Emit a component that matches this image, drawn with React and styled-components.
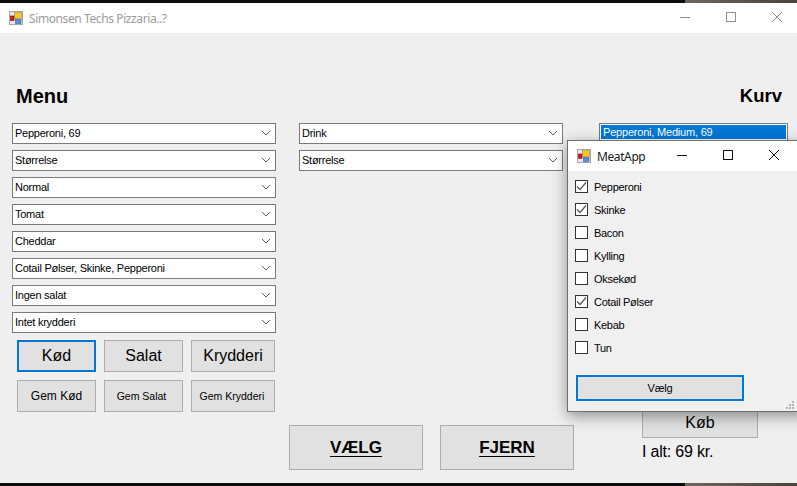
import React from 'react'
import styled, { createGlobalStyle } from 'styled-components'

const GlobalStyle = createGlobalStyle`
  html, body {
    margin: 0;
    padding: 0;
    width: 797px;
    height: 486px;
    overflow: hidden;
    background: #0c0c0c;
  }
  * { box-sizing: border-box; }
`

const Screen = styled.div`
  position: relative;
  width: 797px;
  height: 486px;
  overflow: hidden;
  display: flex;
  flex-direction: column;
  font-family: "Liberation Sans", Arial, sans-serif;
  color: #000;
`

const DesktopStrip = styled.div`
  height: 3px;
  flex: none;
  background: linear-gradient(to right, #0c0c0c 0, #0c0c0c 685px, #6e655a 685px, #4a443d 797px);
`

const MainWindow = styled.div`
  flex: 1;
  display: flex;
  flex-direction: column;
  background: #efefef;
`

const TitleBar = styled.div`
  height: 30px;
  flex: none;
  display: flex;
  align-items: center;
  background: #fff;
  padding-left: 9px;
  margin-right: ${p => p.$right}px;
`

const TitleText = styled.span`
  font-family: "Noto Sans", "Open Sans", sans-serif;
  font-size: 12px;
  letter-spacing: -0.4px;
  margin-left: 6px;
  color: ${p => p.$active ? '#1a1a1a' : '#9b9b9b'};
  flex: 1;
`

const WinButton = styled.span`
  width: 46px;
  height: 100%;
  flex: none;
  display: flex;
  align-items: center;
  justify-content: center;
  padding-bottom: 2px;
  color: ${p => p.$active ? '#111' : '#8f8f8f'};
`

const Headings = styled.div`
  height: 90px;
  flex: none;
  display: flex;
  justify-content: space-between;
  align-items: flex-end;
  padding: 0 15px 16px 16px;
`

const Heading = styled.h1`
  margin: 0;
  font-size: ${p => p.$size}px;
  line-height: 22px;
  font-weight: 700;
`

const Columns = styled.div`
  display: flex;
  height: 347px;
  padding-left: 12px;
`

const Column = styled.div`
  width: ${p => p.$width}px;
  margin-left: ${p => p.$left || 0}px;
  flex: none;
  display: flex;
  flex-direction: column;
  justify-content: ${p => p.$spread ? 'space-between' : 'flex-start'};
`

const ComboStack = styled.div`
  display: flex;
  flex-direction: column;
  gap: 6px;
  margin-left: ${p => p.$left || 0}px;
  width: 264px;
`

const ComboBox = styled.div`
  height: 21px;
  display: flex;
  align-items: center;
  justify-content: space-between;
  background: #fff;
  border: 1px solid #7a7a7a;
  padding: 0 4px 1px 2px;
  font-size: 11px;
  letter-spacing: -0.25px;
  white-space: nowrap;
`

const ButtonGrid = styled.div`
  display: grid;
  grid-template-columns: 79px 79px 84px;
  grid-auto-rows: 32px;
  gap: 8px;
  margin: 7px 0 0 5px;
`

const Button = styled.div`
  display: flex;
  align-items: center;
  justify-content: center;
  background: #e1e1e1;
  border: ${p => p.$focus ? '2px solid #0078d7' : '1px solid #adadad'};
  font-size: ${p => p.$size}px;
  font-weight: ${p => p.$bold ? 700 : 400};
  text-decoration: ${p => p.$bold ? 'underline' : 'none'};
  text-underline-offset: 3px;
  padding: ${p => p.$pad || '0'};
  height: ${p => p.$height ? p.$height + 'px' : 'auto'};
  width: ${p => p.$width ? p.$width + 'px' : 'auto'};
`

const BigRow = styled.div`
  display: flex;
  gap: 17px;
`

const ListBox = styled.div`
  width: 189px;
  height: 60px;
  background: #fff;
  border: 1px solid #7a7a7a;
  padding: 1px;
`

const ListItem = styled.div`
  height: 14px;
  line-height: 14px;
  background: #0078d7;
  color: #fff;
  font-size: 11px;
  letter-spacing: -0.2px;
  padding-left: 2px;
  white-space: nowrap;
`

const Checkout = styled.div`
  display: flex;
  flex-direction: column;
  margin-left: 43px;
`

const Total = styled.div`
  font-size: 16px;
  letter-spacing: -0.2px;
  line-height: 18px;
  margin-top: 5px;
  height: 27px;
`

const MeatWindow = styled.div`
  position: absolute;
  left: 567px;
  top: 140px;
  width: 240px;
  height: 272px;
  display: flex;
  flex-direction: column;
  background: #f0f0f0;
  border: 1px solid #6f6f6f;
  box-shadow: 0 4px 14px rgba(0, 0, 0, 0.4);
`

const CheckList = styled.div`
  display: flex;
  flex-direction: column;
  gap: 10px;
  padding: 9px 0 0 7px;
`

const CheckRow = styled.label`
  height: 13px;
  display: flex;
  align-items: center;
  gap: 6px;
  font-size: 11px;
  letter-spacing: -0.3px;
`

const CheckBox = styled.span`
  width: 13px;
  height: 13px;
  flex: none;
  display: flex;
  align-items: center;
  justify-content: center;
  background: #fff;
  border: 1px solid #333;
`

const ChooseButton = styled(Button)`
  margin: 21px 0 0 8px;
  letter-spacing: -0.2px;
`

const Grip = styled.svg`
  position: absolute;
  right: 11px;
  bottom: 1px;
`

const Chevron = () => (
  <svg width="10" height="6" viewBox="0 0 10 6" fill="none" stroke="#606060" strokeWidth="1">
    <path d="M1 1l4 4 4-4" />
  </svg>
)

const AppIcon = () => (
  <svg width="14" height="14" viewBox="0 0 14 14">
    <rect x="0.5" y="0.5" width="13" height="13" fill="#e8e8e8" stroke="#a8a8a8" />
    <rect x="5.5" y="1.5" width="7" height="6" fill="#f6c530" stroke="#b58a1a" strokeWidth="0.6" />
    <rect x="1.5" y="5" width="3.5" height="4.5" fill="#c81e1e" stroke="#7d1010" strokeWidth="0.6" />
    <rect x="6.5" y="8.5" width="5.5" height="4" fill="#5b8fdc" stroke="#355fa0" strokeWidth="0.6" />
  </svg>
)

const MinIcon = () => (
  <svg width="10" height="10" viewBox="0 0 10 10" stroke="currentColor" strokeWidth="1">
    <path d="M0 5.5h10" />
  </svg>
)

const MaxIcon = () => (
  <svg width="10" height="10" viewBox="0 0 10 10" fill="none" stroke="currentColor" strokeWidth="1">
    <rect x="0.5" y="0.5" width="9" height="9" />
  </svg>
)

const CloseIcon = () => (
  <svg width="10" height="10" viewBox="0 0 10 10" fill="none" stroke="currentColor" strokeWidth="1">
    <path d="M0 0l10 10M10 0L0 10" />
  </svg>
)

const Tick = () => (
  <svg width="11" height="11" viewBox="0 0 11 11" fill="none" stroke="#555" strokeWidth="1.2">
    <path d="M1 5.5l3 3 6-7" />
  </svg>
)

const menuCombos = [
  'Pepperoni, 69',
  'Størrelse',
  'Normal',
  'Tomat',
  'Cheddar',
  'Cotail Pølser, Skinke, Pepperoni',
  'Ingen salat',
  'Intet krydderi',
]

const drinkCombos = ['Drink', 'Størrelse']

const meats = [
  ['Pepperoni', true],
  ['Skinke', true],
  ['Bacon', false],
  ['Kylling', false],
  ['Oksekød', false],
  ['Cotail Pølser', true],
  ['Kebab', false],
  ['Tun', false],
]

function Combos({ items, left }) {
  return (
    <ComboStack $left={left}>
      {items.map((text, i) => (
        <ComboBox key={i}>
          {text}
          <Chevron />
        </ComboBox>
      ))}
    </ComboStack>
  )
}

export default function App() {
  return (
    <Screen>
      <GlobalStyle />
      <DesktopStrip />
      <MainWindow>
        <TitleBar $right={-3}>
          <AppIcon />
          <TitleText>Simonsen Techs Pizzaria..?</TitleText>
          <WinButton><MinIcon /></WinButton>
          <WinButton><MaxIcon /></WinButton>
          <WinButton><CloseIcon /></WinButton>
        </TitleBar>
        <Headings>
          <Heading $size={20}>Menu</Heading>
          <Heading $size={18.5}>Kurv</Heading>
        </Headings>
        <Columns>
          <Column $width={264}>
            <Combos items={menuCombos} />
            <ButtonGrid>
              <Button $size={16} $focus>Kød</Button>
              <Button $size={16}>Salat</Button>
              <Button $size={16}>Krydderi</Button>
              <Button $size={12}>Gem Kød</Button>
              <Button $size={10.5} $pad="0 4px 0 0">Gem Salat</Button>
              <Button $size={10.5} $pad="0 2px 0 0">Gem Krydderi</Button>
            </ButtonGrid>
          </Column>
          <Column $width={285} $left={13} $spread>
            <Combos items={drinkCombos} left={10} />
            <BigRow>
              <Button $size={17} $bold $width={134} $height={45}>VÆLG</Button>
              <Button $size={17} $bold $width={134} $height={45}>FJERN</Button>
            </BigRow>
          </Column>
          <Column $width={198} $left={25} $spread>
            <ListBox>
              <ListItem>Pepperoni, Medium, 69</ListItem>
            </ListBox>
            <Checkout>
              <Button $size={16} $width={116} $height={34} $pad="3px 0 0">Køb</Button>
              <Total>I alt: 69 kr.</Total>
            </Checkout>
          </Column>
        </Columns>
      </MainWindow>
      <DesktopStrip />

      <MeatWindow>
        <TitleBar $right={9}>
          <AppIcon />
          <TitleText $active>MeatApp</TitleText>
          <WinButton $active><MinIcon /></WinButton>
          <WinButton $active><MaxIcon /></WinButton>
          <WinButton $active><CloseIcon /></WinButton>
        </TitleBar>
        <CheckList>
          {meats.map(([name, checked]) => (
            <CheckRow key={name}>
              <CheckBox>{checked && <Tick />}</CheckBox>
              {name}
            </CheckRow>
          ))}
        </CheckList>
        <ChooseButton $size={11} $focus $width={168} $height={26}>Vælg</ChooseButton>
        <Grip width="10" height="10" viewBox="0 0 10 10" fill="#b4b4b4">
          <rect x="7" y="1" width="2" height="2" />
          <rect x="4" y="4" width="2" height="2" />
          <rect x="7" y="4" width="2" height="2" />
          <rect x="1" y="7" width="2" height="2" />
          <rect x="4" y="7" width="2" height="2" />
          <rect x="7" y="7" width="2" height="2" />
        </Grip>
      </MeatWindow>
    </Screen>
  )
}
